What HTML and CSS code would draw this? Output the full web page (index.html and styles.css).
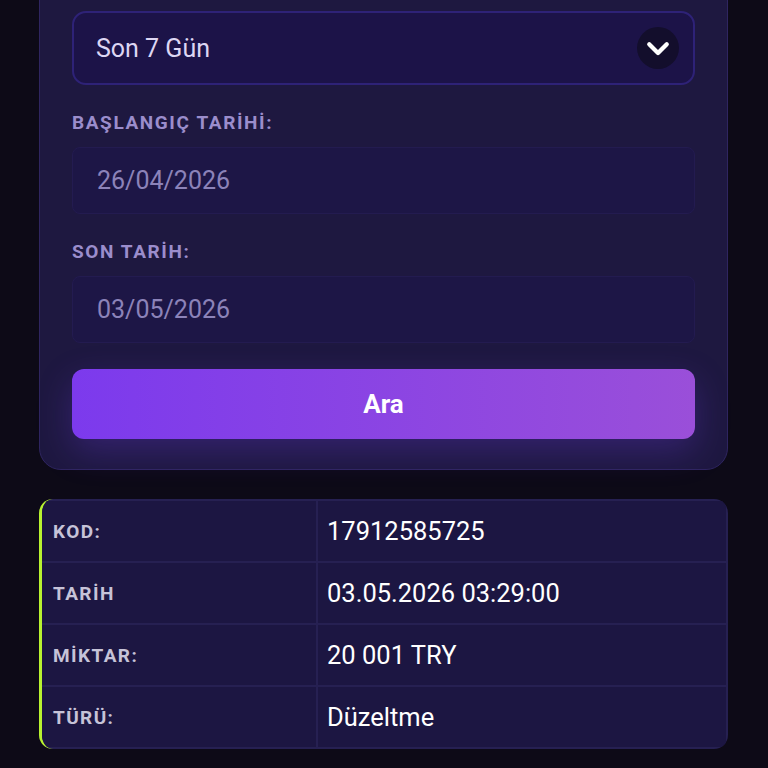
FILE: index.html
```html
<!DOCTYPE html>
<html lang="tr">
<head>
    <meta charset="UTF-8">
    <meta name="viewport" content="width=device-width, initial-scale=1.0">
    <title>İşlem Geçmişi</title>

    <link rel="stylesheet" href="styles.css">
</head>
<body>
    <div class="filter-card">
        <div class="select-box">
            <span>Son 7 Gün</span>
            <span class="chevron">
                <svg width="30" height="30" viewBox="0 0 24 24" fill="none" stroke="#fff" stroke-width="3.4" stroke-linecap="round" stroke-linejoin="round">
                    <path d="M5 9l7 7 7-7"/>
                </svg>
            </span>
        </div>

        <label class="field-label">Başlangıç Tarihi:</label>
        <div class="date-input">26/04/2026</div>

        <label class="field-label">Son Tarih:</label>
        <div class="date-input">03/05/2026</div>

        <button class="search-btn">Ara</button>
    </div>

    <div class="result-card">
        <div class="cell key">KOD:</div>
        <div class="cell value">17912585725</div>
        <div class="cell key">TARİH</div>
        <div class="cell value">03.05.2026 03:29:00</div>
        <div class="cell key">MİKTAR:</div>
        <div class="cell value">20 001 TRY</div>
        <div class="cell key">TÜRÜ:</div>
        <div class="cell value">Düzeltme</div>
    </div>
</body>
</html>
```

FILE: styles.css
```css
body {
    background-color: #0d0a17;
    font-family: Roboto, "Noto Sans", sans-serif;
    color: #fff;
    margin: 0;
    padding: 0 40px 0 39px;
}

.filter-card {
    margin-top: -30px;
    padding: 40px 32px 30px;
    background-color: #1e1840;
    border: 1px solid #2f2560;
    border-radius: 22px;
    display: flex;
    flex-direction: column;
}

.select-box {
    height: 70px;
    padding: 0 14px 0 22px;
    background-color: #1c1348;
    border: 2px solid #2e2277;
    border-radius: 14px;
    display: flex;
    align-items: center;
    justify-content: space-between;
    font-size: 25px;
    color: #ddd6f3;
}

.chevron {
    width: 42px;
    height: 42px;
    border-radius: 50%;
    background-color: #130e2c;
    display: flex;
    align-items: center;
    justify-content: center;
}

.field-label {
    margin: 28px 0 14px;
    font-size: 19px;
    font-weight: 700;
    letter-spacing: 1.6px;
    text-transform: uppercase;
    color: #9b8dcc;
    line-height: 20px;
}

.date-input {
    height: 65px;
    padding: 0 24px;
    background-color: #1d1646;
    border: 1px solid #231b50;
    border-radius: 8px;
    display: flex;
    align-items: center;
    font-size: 25px;
    color: #8c83b9;
}

.search-btn {
    margin-top: 26px;
    height: 70px;
    border: none;
    border-radius: 12px;
    background: linear-gradient(90deg, #7c3aed, #9a4fd9);
    box-shadow: 0 12px 34px rgba(110, 60, 230, 0.28);
    font-family: inherit;
    font-size: 26px;
    font-weight: 700;
    color: #fff;
}

.result-card {
    margin-top: 29px;
    display: grid;
    grid-template-columns: 274px 1fr;
    gap: 2px;
    padding: 2px 2px 2px 0;
    background-color: #262052;
    border-left: 3px solid #b8f230;
    border-radius: 14px;
    overflow: hidden;
}

.cell {
    height: 60px;
    display: flex;
    align-items: center;
    background-color: #1c1642;
}

.key {
    padding-left: 11px;
    font-size: 19px;
    font-weight: 700;
    letter-spacing: 1.4px;
    color: #c6c3d8;
}

.value {
    padding-left: 9px;
    font-size: 25.5px;
    color: #fff;
}
```
